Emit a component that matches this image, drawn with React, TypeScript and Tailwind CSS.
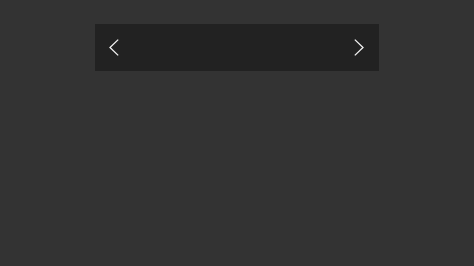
export default function App() {
  return (
    <div className="w-full h-[266px] bg-[#333333] pt-6">
      <div className="mx-auto w-[60%] h-[47px] bg-[#222222] flex items-center justify-between pl-[14px] pr-[15px]">
        <button className="w-[10px] h-[17px] flex items-center justify-center">
          <svg width="10" height="17" viewBox="0 0 10 17" fill="none">
            <polyline points="9.2,0.6 1,8.5 9.2,16.4" stroke="#f2f2f2" strokeWidth="1.3" />
          </svg>
        </button>
        <button className="w-[10px] h-[17px] flex items-center justify-center">
          <svg width="10" height="17" viewBox="0 0 10 17" fill="none">
            <polyline points="0.8,0.6 9,8.5 0.8,16.4" stroke="#f2f2f2" strokeWidth="1.3" />
          </svg>
        </button>
      </div>
    </div>
  )
}
